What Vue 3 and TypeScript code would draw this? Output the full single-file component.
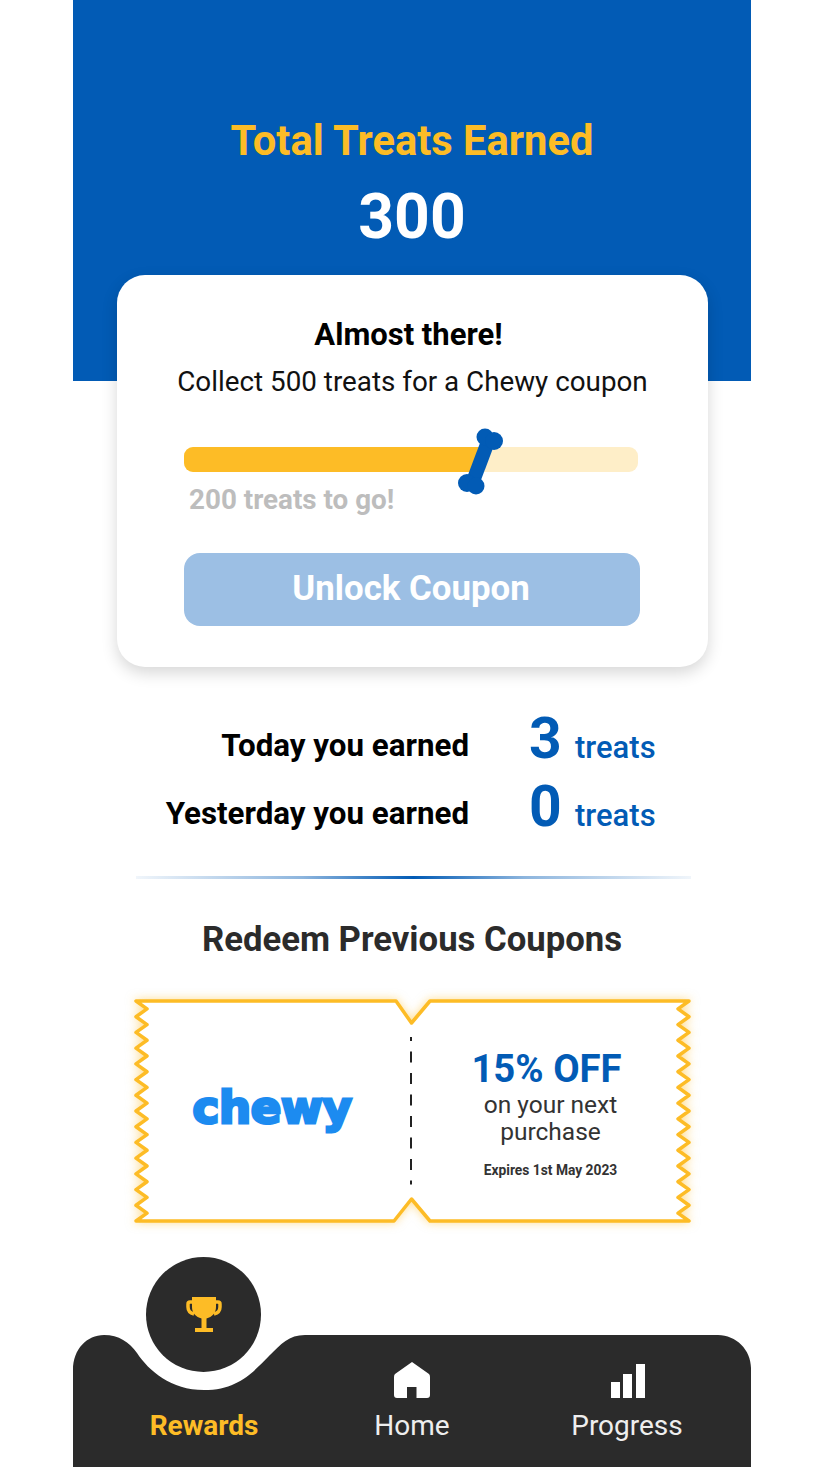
<template>
  <div class="phone">
    <!-- Header -->
    <header class="hero">
      <h1 class="hero-title">Total Treats Earned</h1>
      <div class="hero-total">{{ totalTreats }}</div>
    </header>

    <!-- Progress card -->
    <section class="goal-card">
      <h2 class="goal-title">Almost there!</h2>
      <p class="goal-text">Collect 500 treats for a Chewy coupon</p>
      <div class="track">
        <div class="track-fill" :style="{ width: fillWidth }"></div>
        <svg class="bone" width="50" height="70" viewBox="0 0 50 70" aria-hidden="true">
          <line x1="33" y1="12" x2="16" y2="57" stroke="#025bb5" stroke-width="14" />
          <circle cx="29" cy="10" r="8.5" fill="#025bb5" />
          <circle cx="38" cy="14" r="9" fill="#025bb5" />
          <circle cx="11" cy="56" r="9" fill="#025bb5" />
          <circle cx="20" cy="59" r="8.5" fill="#025bb5" />
        </svg>
      </div>
      <p class="goal-left">200 treats to go!</p>
      <button class="unlock-btn">Unlock Coupon</button>
    </section>

    <!-- Daily stats -->
    <section class="stats">
      <div v-for="row in stats" :key="row.label" class="stat-row">
        <span class="stat-label">{{ row.label }}</span>
        <span class="stat-num">{{ row.value }}</span>
        <span class="stat-unit">treats</span>
      </div>
    </section>

    <div class="divider"></div>

    <h2 class="redeem-title">Redeem Previous Coupons</h2>

    <!-- Coupon -->
    <section class="coupon">
      <svg class="coupon-bg" width="575" height="242" viewBox="0 0 575 242" aria-hidden="true">
        <path :d="couponPath" fill="#fff" stroke="#fdbc26" stroke-width="3.5" stroke-linejoin="round" />
        <line x1="286" y1="47" x2="286" y2="197" stroke="#222" stroke-width="2" stroke-dasharray="4 10.5 11 10.5 11 10.5 11 10.5 11 10.5 11 10.5 11 10.5 4" />
      </svg>
      <div class="coupon-logo"><span class="chewy">chewy</span></div>
      <div class="coupon-info">
        <div class="coupon-off">15% OFF</div>
        <div class="coupon-desc">on your next<br />purchase</div>
        <div class="coupon-exp">Expires 1st May 2023</div>
      </div>
    </section>

    <!-- Bottom nav -->
    <nav class="nav">
      <svg class="nav-bg" width="678" height="132" viewBox="0 0 678 132" aria-hidden="true">
        <path
          d="M0 132 V35 C0 14 14 0 31 0 C46 0 56 7 64 18 C76 36 98 55 131 55 C165 55 180 37 196 21 C208 9 216 0 232 0 H645 C663 0 678 15 678 33 V132 Z"
          fill="#2b2b2b"
        />
      </svg>
      <div class="fab">
        <svg width="36" height="36" viewBox="0 0 36 36" aria-hidden="true">
          <path fill="#fdbc26" d="M6 0 H30 V10 C30 16 26 20 20.500 21.500 V31 H27 V35 H9 V31 H15.500 V21.500 C10 20 6 16 6 10 Z" />
          <path fill="none" stroke="#fdbc26" stroke-width="3.5" d="M6 5 H4 C2.500 5 2 6 2 7 V10 C2 13 4 16 8 17 M30 5 H32 C33.500 5 34 6 34 7 V10 C34 13 32 16 28 17" />
        </svg>
      </div>
      <div class="tabs">
        <div class="tab tab-active">
          <span class="tab-icon"></span>
          <span>Rewards</span>
        </div>
        <div class="tab">
          <svg class="tab-icon" width="36" height="36" viewBox="0 0 36 36" aria-hidden="true">
            <path fill="#fff" d="M18 0 L35 12 Q36 13 36 15 V33 Q36 36 33 36 H22.500 V25 H13 V36 H3 Q0 36 0 33 V15 Q0 13 1 12 Z" />
          </svg>
          <span>Home</span>
        </div>
        <div class="tab">
          <svg class="tab-icon" width="36" height="36" viewBox="0 0 36 36" aria-hidden="true">
            <path fill="#fff" d="M2 20 H11 V36 H2 Z M14 12 H23 V36 H14 Z M27 2 H36 V36 H27 Z" />
          </svg>
          <span>Progress</span>
        </div>
      </div>
    </nav>
  </div>
</template>

<script setup lang="ts">
import { computed } from 'vue'

const totalTreats = 300
const fillWidth = '65%'

const stats = [
  { label: 'Today you earned', value: 3 },
  { label: 'Yesterday you earned', value: 0 },
]

// Ticket outline: zigzag on the short sides, v-notches on the fold line
const zigzag = (xOut: number, xIn: number, yStart: number, yEnd: number, teeth: number) => {
  const step = (yEnd - yStart) / teeth
  let d = ''
  for (let i = 0; i < teeth; i++) {
    d += `L${xIn} ${yStart + step * (i + 0.5)} L${xOut} ${yStart + step * (i + 1)} `
  }
  return d
}

const couponPath = computed(() => {
  const top = 11
  const bottom = 231
  return [
    `M11 ${top} H271 L286.500 33 L305 ${top} H564`,
    zigzag(564, 553, top, bottom, 14),
    `H305 L286.500 209 L269 ${bottom} H11`,
    zigzag(11, 22, bottom, top, 14),
    'Z',
  ].join(' ')
})
</script>

<style scoped>
.phone {
  position: relative;
  width: 678px;
  height: 1467px;
  margin: 0 74px 0 73px;
  background: #fff;
  font-family: Roboto, "Liberation Sans", sans-serif;
  overflow: hidden;
}

.hero {
  height: 381px;
  padding-top: 117px;
  box-sizing: border-box;
  background: #025bb5;
  text-align: center;
}

.hero-title {
  margin: 0;
  font-size: 41.7px;
  line-height: 48px;
  font-weight: 700;
  color: #fdbc26;
}

.hero-total {
  margin-top: 17px;
  font-size: 62.4px;
  line-height: 70px;
  font-weight: 700;
  color: #fff;
}

.goal-card {
  position: relative;
  box-sizing: border-box;
  width: 591px;
  height: 392px;
  margin: -106px 0 0 44px;
  padding: 44px 67px 0;
  background: #fff;
  border-radius: 28px;
  box-shadow: 0 6px 16px rgba(0, 0, 0, 0.16);
}

.goal-title {
  margin: 0 0 0 -8px;
  font-size: 31px;
  line-height: 32px;
  font-weight: 700;
  color: #000;
  text-align: center;
}

.goal-text {
  margin: 15px -20px 0;
  font-size: 27.8px;
  line-height: 32px;
  color: #111;
  text-align: center;
  white-space: nowrap;
}

.track {
  position: relative;
  width: 454px;
  height: 25px;
  margin-top: 49px;
  background: #feeec8;
  border-radius: 9px;
}

.track-fill {
  height: 100%;
  background: #fdbc26;
  border-radius: 9px 0 0 9px;
}

.bone {
  position: absolute;
  left: 272px;
  top: -20px;
}

.goal-left {
  margin: 12px 0 0 5px;
  font-size: 27.8px;
  line-height: 32px;
  font-weight: 700;
  color: #bdbdbd;
}

.unlock-btn {
  display: block;
  width: 456px;
  height: 73px;
  margin-top: 37px;
  padding: 0 2px 4px 0;
  border: 0;
  border-radius: 16px;
  background: #9cbfe4;
  color: #fff;
  font-family: inherit;
  font-size: 34.8px;
  font-weight: 700;
}

.stats {
  margin-top: 40px;
  display: flex;
  flex-direction: column;
  gap: 4px;
}

.stat-row {
  display: grid;
  grid-template-columns: 396px 46px auto;
  align-items: end;
  height: 64px;
}

.stat-label {
  font-size: 31.3px;
  line-height: 50px;
  font-weight: 700;
  color: #000;
  text-align: right;
  white-space: nowrap;
}

.stat-num {
  margin-left: 60px;
  font-size: 57px;
  line-height: 64px;
  font-weight: 700;
  color: #025bb5;
}

.stat-unit {
  margin-left: 60px;
  font-size: 31px;
  line-height: 46px;
  font-weight: 500;
  color: #025bb5;
}

.divider {
  width: 555px;
  height: 3px;
  margin: 37px 0 0 63px;
  background: linear-gradient(90deg, rgba(2, 91, 181, 0.06), rgba(2, 91, 181, 0.45) 30%, #025bb5 50%, rgba(2, 91, 181, 0.45) 70%, rgba(2, 91, 181, 0.06));
}

.redeem-title {
  margin: 40px 0 0;
  font-size: 34.7px;
  line-height: 40px;
  font-weight: 700;
  color: #2b2b2b;
  text-align: center;
}

.coupon {
  position: relative;
  display: flex;
  width: 555px;
  height: 222px;
  margin: 42px 0 0 62px;
}

.coupon-bg {
  position: absolute;
  left: -10px;
  top: -11px;
  filter: drop-shadow(0 0 5px rgba(253, 188, 38, 0.5));
}

.coupon-logo {
  position: relative;
  width: 276px;
  padding: 0 2px 8px 0;
  box-sizing: border-box;
  display: flex;
  justify-content: center;
  align-items: center;
}

.chewy {
  font-family: "DejaVu Sans", sans-serif;
  font-size: 45px;
  line-height: 60px;
  font-weight: 700;
  letter-spacing: -0.2px;
  color: #1c8bf0;
  -webkit-text-stroke: 3px #1c8bf0;
}

.coupon-info {
  position: relative;
  flex: 1;
  padding-top: 46px;
  text-align: center;
  color: #333;
}

.coupon-off {
  margin-left: -8px;
  font-size: 38.3px;
  line-height: 44px;
  font-weight: 700;
  color: #025bb5;
}

.coupon-desc {
  font-size: 24.5px;
  line-height: 27px;
}

.coupon-exp {
  margin-top: 17px;
  font-size: 13.8px;
  line-height: 16px;
  font-weight: 700;
}

.nav {
  position: absolute;
  left: 0;
  bottom: 0;
  width: 678px;
  height: 132px;
}

.nav-bg {
  position: absolute;
  left: 0;
  top: 0;
}

.fab {
  position: absolute;
  left: 73px;
  top: -78px;
  width: 115px;
  height: 115px;
  border-radius: 50%;
  background: #2b2b2b;
  display: flex;
  align-items: center;
  justify-content: center;
}

.tabs {
  position: relative;
  display: grid;
  grid-template-columns: 208px 208px 222px;
  padding: 27px 0 0 27px;
}

.tab {
  display: flex;
  flex-direction: column;
  align-items: center;
  font-size: 28px;
  line-height: 32px;
  color: #eee;
}

.tab-icon {
  display: block;
  width: 36px;
  height: 36px;
  margin-bottom: 12px;
}

.tab-active {
  font-weight: 700;
  color: #fdbc26;
}
</style>

<style>
html,
body {
  background: #fff;
}
</style>
